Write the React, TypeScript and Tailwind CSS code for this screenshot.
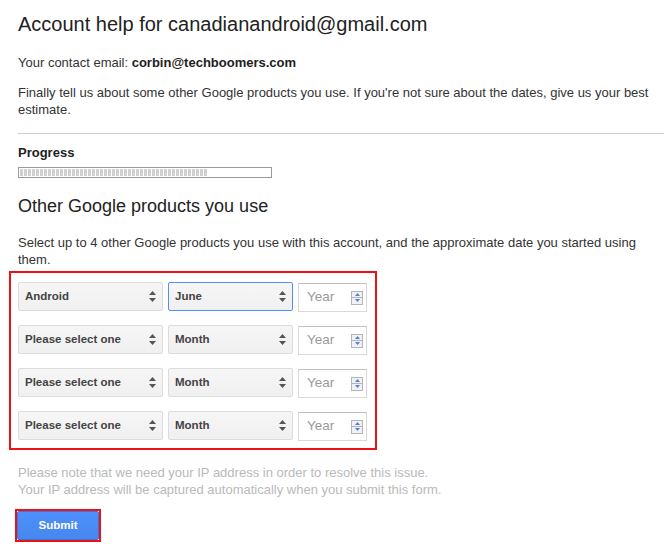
const products = [
  { product: 'Android', month: 'June', focused: true },
  { product: 'Please select one', month: 'Month', focused: false },
  { product: 'Please select one', month: 'Month', focused: false },
  { product: 'Please select one', month: 'Month', focused: false },
];

function SelectArrows() {
  return (
    <svg width="7" height="11" viewBox="0 0 7 11" className="shrink-0">
      <polygon points="0,4 3.5,0 7,4" fill="#555" />
      <polygon points="0,7 3.5,11 7,7" fill="#555" />
    </svg>
  );
}

function FakeSelect({ label, width, focused }: { label: string; width: string; focused?: boolean }) {
  return (
    <div
      className={`${width} h-[29px] flex items-center justify-between pl-[6px] pr-[6px] rounded-[2px] border bg-gradient-to-b from-[#f6f6f6] to-[#f0f0f0] ${
        focused ? 'border-[#4d90fe]' : 'border-[#dcdcdc]'
      }`}
    >
      <span className="text-[11.5px] font-bold text-[#444]">{label}</span>
      <SelectArrows />
    </div>
  );
}

function YearInput() {
  return (
    <div className="w-[69px] h-[29px] mt-[1px] flex items-center justify-between pl-[8px] pr-[3px] bg-white border border-[#d9d9d9] border-t-[#c0c0c0]">
      <span className="text-[13.5px] text-[#999]">Year</span>
      {/* spinner */}
      <div className="flex flex-col w-[12px]">
        <div className="h-[7px] flex items-center justify-center border border-[#b5b5b5] bg-[#eef1f7]">
          <svg width="5" height="3" viewBox="0 0 5 3">
            <polygon points="0,3 2.5,0 5,3" fill="#5b7fc7" />
          </svg>
        </div>
        <div className="h-[7px] flex items-center justify-center border border-t-0 border-[#b5b5b5] bg-[#eef1f7]">
          <svg width="5" height="3" viewBox="0 0 5 3">
            <polygon points="0,0 2.5,3 5,0" fill="#5b7fc7" />
          </svg>
        </div>
      </div>
    </div>
  );
}

export default function App() {
  return (
    <div className="w-[664px] h-[556px] bg-white pl-[18px] pt-[12px] font-['Liberation_Sans',Arial,sans-serif] text-[#333] overflow-hidden">
      <h1 className="text-[20px] leading-[24px] text-[#222]">Account help for canadianandroid@gmail.com</h1>

      <p className="mt-[18px] text-[13px] leading-[17px]">
        Your contact email: <span className="font-bold text-[#222]">corbin@techboomers.com</span>
      </p>

      <p className="mt-[13px] text-[13px] leading-[17px] pr-[2px]">
        Finally tell us about some other Google products you use. If you're not sure about the dates, give us your best
        estimate.
      </p>

      <div className="mt-[15px] border-t border-[#cccccc]" />

      <div className="mt-[10px] text-[13px] leading-[17px] font-bold text-[#222]">Progress</div>
      <div className="mt-[6px] w-[254px] h-[11px] border border-[#9a9a9a] p-[1px]">
        <div className="h-full w-[188px] bg-[repeating-linear-gradient(90deg,#d0d0d0_0px,#d0d0d0_3px,#ffffff_3px,#ffffff_4px)]" />
      </div>

      <h2 className="mt-[17px] text-[18px] leading-[22px] text-[#222]">Other Google products you use</h2>

      <p className="mt-[17px] text-[13px] leading-[17px] pr-[8px]">
        Select up to 4 other Google products you use with this account, and the approximate date you started using
        them.
      </p>

      <div className="mt-[3px] ml-[-9px] w-[368px] border-2 border-[#ee1111] pl-[7px] pt-[9px] pb-[7px] flex flex-col gap-[13px]">
        {products.map((p, i) => (
          <div key={i} className="flex items-start gap-[5px]">
            <FakeSelect label={p.product} width="w-[145px]" />
            <FakeSelect label={p.month} width="w-[125px]" focused={p.focused} />
            <YearInput />
          </div>
        ))}
      </div>

      <p className="mt-[14px] text-[13px] leading-[17px] text-[#b9b9b9]">
        Please note that we need your IP address in order to resolve this issue.
        <br />
        Your IP address will be captured automatically when you submit this form.
      </p>

      <div className="mt-[11px] ml-[-3px] inline-block border-2 border-[#ee1111]">
        <button className="w-[82px] h-[29px] rounded-[2px] border border-[#3079ed] bg-gradient-to-b from-[#4d90fe] to-[#4787ed] text-white text-[11.5px] font-bold">
          Submit
        </button>
      </div>
    </div>
  );
}
